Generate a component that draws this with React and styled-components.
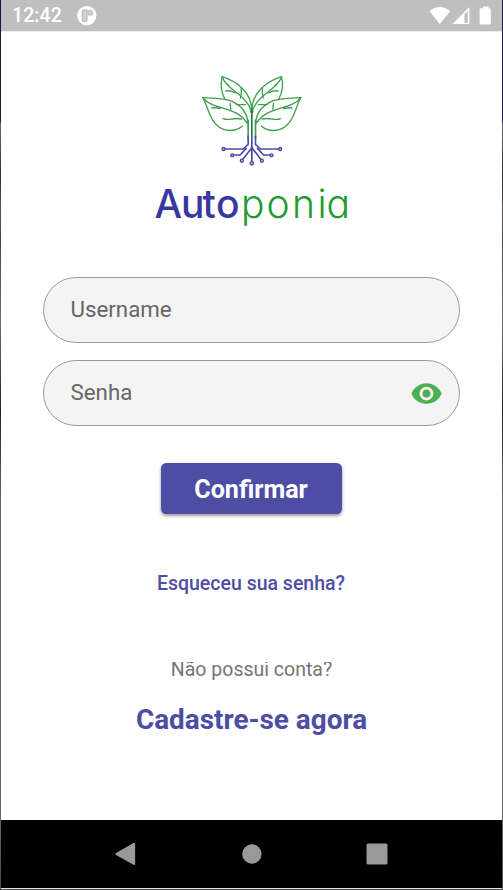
import React from 'react';
import styled, { createGlobalStyle } from 'styled-components';

const GlobalStyle = createGlobalStyle`
  * { box-sizing: border-box; }
  body { margin: 0; background: #fff; font-family: Roboto, sans-serif; }
  button, input { font-family: inherit; }
`;

const Device = styled.div`
  width: 503px;
  height: 890px;
  padding: 0 1px 0 1px;
  overflow: hidden;
  display: flex;
  flex-direction: column;
  background: linear-gradient(#191740 0 120px, #68696b 125px, #303030 175px, #5b5147 210px, #464646 240px, #707070 320px, #222 410px, #666 500px, #666 820px, #4b4b4b 890px);
`;

const StatusBar = styled.header`
  height: 31px;
  flex: none;
  display: flex;
  align-items: center;
  padding: 0 9px 0 11px;
  background: #bfbfbf;
  color: #fff;
`;

const Clock = styled.span`
  width: 65px;
  font-size: 19.5px;
  line-height: 30px;
  font-weight: 500;
  letter-spacing: 0.1px;
`;

const StatusIcons = styled.div`
  margin-left: auto;
  display: flex;
`;

const Screen = styled.main`
  flex: none;
  height: 789px;
  background: #fff;
  border-top: 1px solid #ececec;
  display: flex;
  flex-direction: column;
  align-items: center;
`;

const Logo = styled.svg`
  display: block;
  flex: none;
  margin-top: 33px;
`;

const Wordmark = styled.text`
  font-family: Inter, sans-serif;
  font-size: 39px;
  font-feature-settings: 'cv11' 1;
  font-weight: ${(p) => p.$weight};
  fill: ${(p) => p.$color};
`;

const Form = styled.form`
  width: 417px;
  margin-top: 42px;
  display: flex;
  flex-direction: column;
  align-items: center;
  gap: 17px;
`;

const Field = styled.label`
  width: 100%;
  height: 66px;
  display: flex;
  align-items: center;
  padding: 0 16.5px 0 26.5px;
  border: 1.4px solid #9b9b9b;
  border-radius: 34px;
  background: #f4f4f4;
`;

const Input = styled.input`
  flex: 1;
  min-width: 0;
  padding: 0 0 2px;
  border: 0;
  outline: 0;
  background: transparent;
  font-size: 22.3px;
  line-height: 28px;
  color: #666;
  &::placeholder { color: #666; opacity: 1; }
`;

const IconButton = styled.button`
  padding: 0;
  border: 0;
  background: none;
  display: flex;
`;

const SubmitButton = styled.button`
  width: 181px;
  height: 51px;
  margin-top: 20px;
  padding: 2px 1px 0 0;
  border: 0;
  border-radius: 5.5px;
  background: #4e4da5;
  color: #fff;
  font-size: 25.1px;
  font-weight: 700;
  box-shadow: 0 2px 3px rgba(0, 0, 0, 0.3), 0 1px 4px rgba(0, 0, 0, 0.15);
`;

const ForgotLink = styled.a`
  margin-top: 58px;
  padding-right: 1px;
  font-size: 19.5px;
  line-height: 24px;
  font-weight: 500;
  color: #4e4da5;
`;

const Prompt = styled.p`
  margin: 66px 0 0;
  height: 21px;
  overflow: hidden;
  display: flex;
  align-items: flex-end;
  font-size: 19.5px;
  line-height: 26px;
  color: #757575;
`;

const SignUpLink = styled.a`
  margin-top: 20px;
  font-size: 27.9px;
  line-height: 34px;
  font-weight: 700;
  color: #4e4da5;
`;

const NavBar = styled.nav`
  flex: none;
  height: 68px;
  background: #000;
  display: flex;
  justify-content: center;
  align-items: center;
  gap: 85px;
`;

const BottomEdge = styled.div`
  flex: none;
  height: 1px;
  background: #e4e4e4;
`;

const HalfPlant = () => (
  <g strokeLinecap="round" strokeLinejoin="round">
    <g fill="none" stroke="#3da14c" strokeWidth="4">
      <path d="M95 35 C140 49 182 82 184 134" />
      <path d="M95 35 C89 60 93 84 103 102" />
      <path d="M95 35 C107 75 169 87 184 143" />
      <path d="M106 78 Q120 75 134 84 M152 71 Q154 84 150 99 M138 119 H165" />
      <path d="M37 98 C75 100 103 100 125 109 C153 122 172 144 173 180" />
      <path d="M37 98 C52 120 57 181 102 194 C124 200 145 194 155 184" />
      <path d="M37 98 C67 137 133 120 170 174" />
      <path d="M64 129 Q76 127 89 131 M119 115 L121 133 M98 161 C115 169 128 156 153 162" />
      <path d="M173 166 V220" strokeWidth="5" />
    </g>
    <g fill="none" stroke="#4b4ba9" strokeWidth="5">
      <path d="M173 214 V238 L158 252 H104" />
      <path d="M167 250 L149 270 H130" />
      <path d="M184 248 L157 283" />
    </g>
    <g fill="#b7b7df" stroke="#4b4ba9" strokeWidth="4">
      <circle cx="99" cy="252" r="4.5" />
      <circle cx="125" cy="271" r="4.5" />
      <circle cx="154" cy="287" r="4.5" />
    </g>
  </g>
);

const AutoponiaLogo = () => (
  <Logo width="210" height="170" viewBox="0 0 210 170" role="img" aria-label="Autoponia">
    <defs>
      <linearGradient id="stem" gradientUnits="userSpaceOnUse" x1="0" y1="130" x2="0" y2="250">
        <stop offset="0" stopColor="#168f35" />
        <stop offset=".5" stopColor="#2c725f" />
        <stop offset="1" stopColor="#4444a8" />
      </linearGradient>
    </defs>
    <g transform="translate(43.5 0) scale(.33333)">
      <HalfPlant />
      <g transform="translate(368 0) scale(-1 1)"><HalfPlant /></g>
      <path d="M181.5 132 H186.5 V290 H181.5 Z" fill="url(#stem)" />
      <circle cx="184" cy="140" r="5" fill="#168f35" />
      <circle cx="184" cy="295" r="5" fill="#b7b7df" stroke="#4b4ba9" strokeWidth="4" />
    </g>
    <Wordmark x="7.5 34 55.5 69" y="152.500" $weight={500} $color="#3838a0">Auto</Wordmark>
    <Wordmark x="94 119.5 145 170.5 179.5" y="152.500" $weight={300} $color="#209a31">ponia</Wordmark>
  </Logo>
);

export default function App() {
  return (
    <>
      <GlobalStyle />
      <Device>
        <StatusBar>
          <Clock>12:42</Clock>
          <svg width="20" height="20" viewBox="0 0 20 20">
            <circle cx="9.8" cy="9.6" r="9.6" fill="#fff" />
            <path d="M5.5 5.6 Q5.5 4.4 6.7 4.4 H9.8 V13 Q9.8 15.4 7.65 15.4 Q5.5 15.4 5.5 13 Z" fill="#d4d4d4" stroke="#bfbfbf" strokeWidth="1.6" />
            <circle cx="13.3" cy="6.7" r="2.3" fill="#d4d4d4" stroke="#bfbfbf" strokeWidth="1.4" />
          </svg>
          <StatusIcons>
            <svg width="64" height="20" viewBox="0 0 64 20" fill="#fff">
              <path d="M.5 5.2 Q10.8-3 21.2 5.2 L10.8 18 Z" />
              <path fillRule="evenodd" d="M23.4 18 L40.4 1 V18 Z M35.4 8.2 V17 H38.8 V5 Z" />
              <path d="M54 .5 H59.6 V2.2 H60.6 Q61.8 2.2 61.8 3.4 V17.2 Q61.8 18.6 60.4 18.6 H52 Q50.6 18.6 50.6 17.2 V3.4 Q50.6 2.2 51.8 2.2 H54 Z" />
            </svg>
          </StatusIcons>
        </StatusBar>
        <Screen>
          <AutoponiaLogo />
          <Form onSubmit={(e) => e.preventDefault()}>
            <Field><Input placeholder="Username" /></Field>
            <Field>
              <Input type="password" placeholder="Senha" />
              <IconButton type="button" aria-label="Mostrar senha">
                <svg width="33" height="33" viewBox="0 0 24 24" fill="#4caf50">
                  <path d="M12 4.5C7 4.5 2.73 7.61 1 12c1.73 4.39 6 7.5 11 7.5s9.27-3.11 11-7.5c-1.73-4.39-6-7.5-11-7.5zM12 17c-2.76 0-5-2.24-5-5s2.24-5 5-5 5 2.24 5 5-2.24 5-5 5zm0-8c-1.66 0-3 1.34-3 3s1.34 3 3 3 3-1.34 3-3-1.34-3-3-3z" />
                </svg>
              </IconButton>
            </Field>
            <SubmitButton>Confirmar</SubmitButton>
          </Form>
          <ForgotLink>Esqueceu sua senha?</ForgotLink>
          <Prompt>Não possui conta?</Prompt>
          <SignUpLink>Cadastre-se agora</SignUpLink>
        </Screen>
        <NavBar>
          <svg width="40" height="24" viewBox="0 0 40 24"><path d="M9 11 L26.5 1 Q28.1 .3 28.1 2 V22 Q28.1 23.6 26.5 22.8 L9 13 Q7.5 12 9 11Z" fill="#999" /></svg>
          <svg width="40" height="24" viewBox="0 0 40 24"><circle cx="19.9" cy="12" r="9.7" fill="#999" /></svg>
          <svg width="40" height="24" viewBox="0 0 40 24"><rect x="9.5" y="1.5" width="21" height="21" rx="1.5" fill="#999" /></svg>
        </NavBar>
        <BottomEdge />
      </Device>
    </>
  );
}
